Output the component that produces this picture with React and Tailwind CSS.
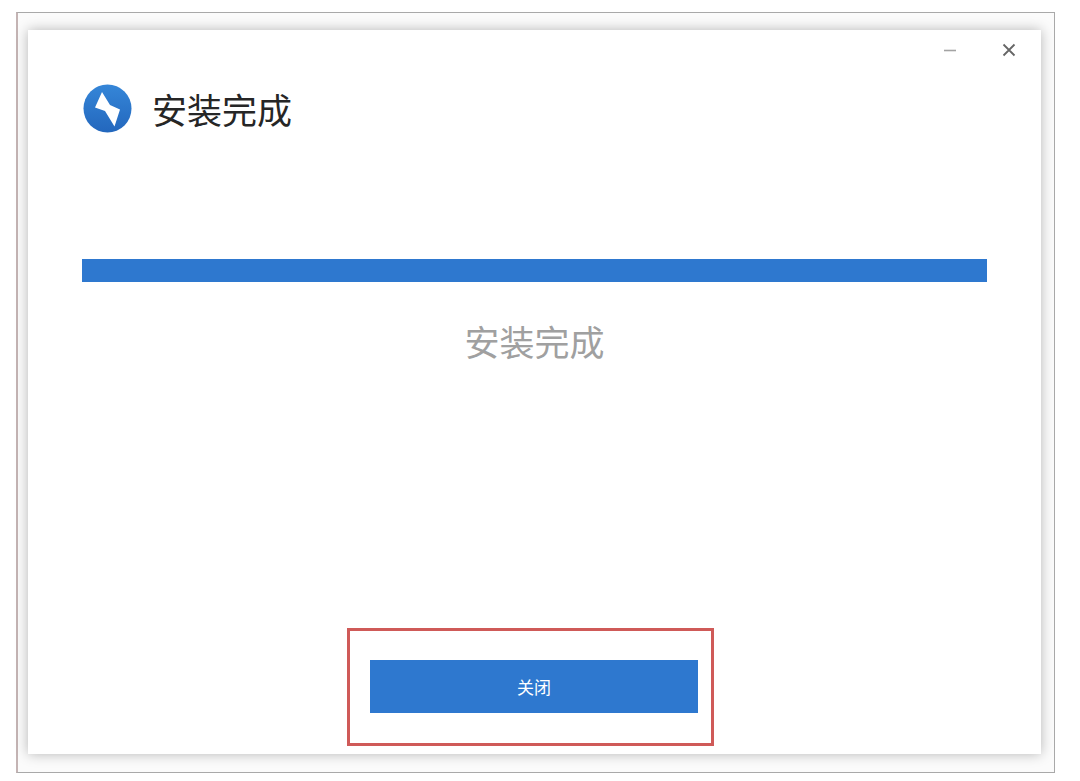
const FONT = 'font-["Noto_Sans_CJK_SC","Noto_Sans",sans-serif]';

function BoltLogo() {
  return (
    <svg width="50" height="50" viewBox="0 0 50 50" className="shrink-0">
      <defs>
        <linearGradient id="logoBg" x1="0" y1="0" x2="0" y2="1">
          <stop offset="0" stopColor="#3586d8" />
          <stop offset="1" stopColor="#2367bd" />
        </linearGradient>
      </defs>
      <circle cx="24.5" cy="24.5" r="24" fill="url(#logoBg)" />
      <path d="M19 8 L12 23.5 L22 27 L31.5 42.5 L37 25.5 L27 21 Z" fill="#fff" />
    </svg>
  );
}

export default function App() {
  return (
    <div className={`w-[1080px] h-[781px] bg-white pl-4 pt-3 overflow-hidden ${FONT}`}>
      {/* screenshot frame around the installer window */}
      <div className="w-[1039px] h-[761px] border border-[#a9a9a9] border-l-2 border-l-[#c4b4b4] pl-[10px] pr-[13px] pt-[17px] pb-[18px] bg-[#fbfbfb]">
        <div className="w-[1013px] h-[724px] bg-white shadow-[0_0_12px_rgba(0,0,0,0.28)] flex flex-col px-[54px]">
          <div className="flex justify-end h-[54px] -mr-[29px] pt-[14px] gap-[46px] items-start">
            <svg width="12" height="12" viewBox="0 0 12 12">
              <path d="M0 6.5H12" stroke="#a3a3a3" strokeWidth="1.6" />
            </svg>
            <svg width="14" height="14" viewBox="0 0 14 14" className="-mt-px">
              <path d="M1.5 1.5L12.5 12.5M12.5 1.5L1.5 12.5" stroke="#666666" strokeWidth="1.8" />
            </svg>
          </div>

          <div className="flex items-center gap-[19px] h-[50px] ml-px">
            <BoltLogo />
            <h1 className="text-[35px] leading-none text-[#262626] font-normal -mt-0.5">安装完成</h1>
          </div>

          <div className="w-[905px] h-[23px] bg-[#2e78cf] mt-[125px]"></div>

          <p className="w-[905px] text-center text-[35px] leading-[44px] text-[#a0a0a0] mt-[37px]">安装完成</p>

          <div className="w-[367px] h-[118px] border-[3px] border-[#cf5a58] ml-[265px] mt-[265px] pl-[20px] pt-[29px]">
            <button className="w-[328px] h-[53px] bg-[#2e78cf] text-white text-[17px] flex items-center justify-center">关闭</button>
          </div>
        </div>
      </div>
    </div>
  );
}
